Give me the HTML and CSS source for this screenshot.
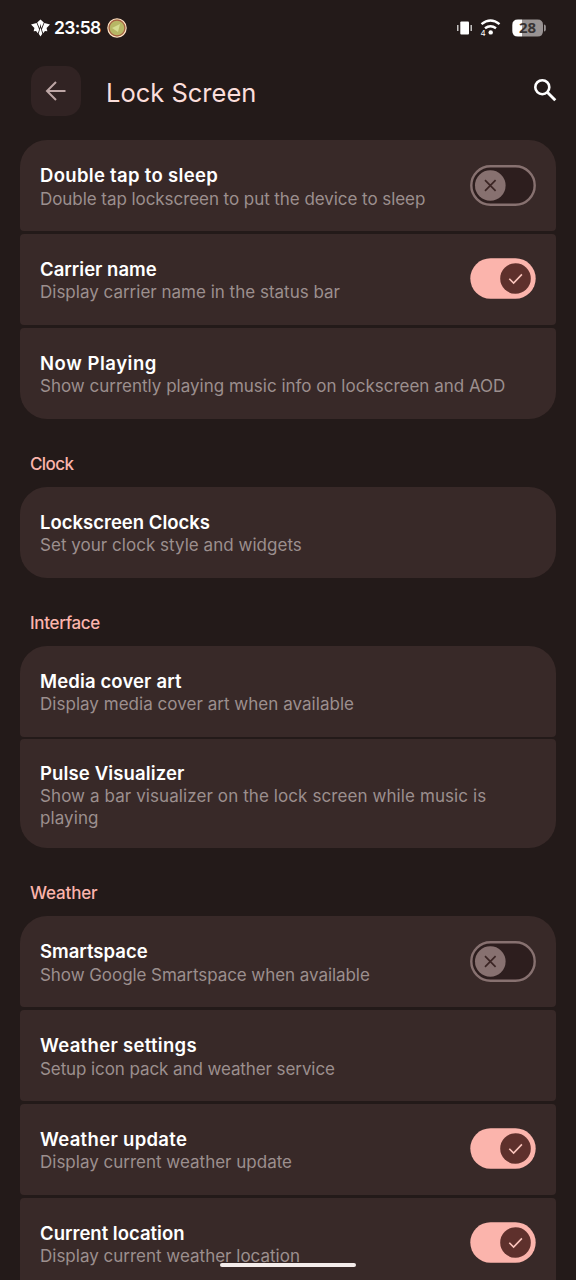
FILE: index.html
```html
<!DOCTYPE html>
<html lang="en">
<head>
<meta charset="utf-8">
<title>Lock Screen</title>
<link rel="stylesheet" href="styles.css">
</head>
<body>
<svg class="defs" width="0" height="0" aria-hidden="true">
  <symbol id="off" viewBox="0 0 66 41">
    <rect x="1.3" y="1.3" width="63.4" height="38.4" rx="19.2" fill="#2d1e1e" stroke="#877170" stroke-width="2.4"/>
    <circle cx="20.3" cy="20.5" r="15.3" fill="#877170"/>
    <path d="M15 15.2l10.6 10.6M25.600 15.200L15 25.800" fill="none" stroke="#3b2524" stroke-width="1.7"/>
  </symbol>
  <symbol id="on" viewBox="0 0 66 41">
    <rect x="0.300" y="0.300" width="65.400" height="40.400" rx="20.200" fill="#fbb4ac"/>
    <circle cx="45.500" cy="20.500" r="15.300" fill="#5e302c"/>
    <path d="M39.300 20.700l4.300 4.300 8.300-8.600" fill="none" stroke="#fbc4bc" stroke-width="1.600"/>
  </symbol>
</svg>
<div class="screen">
  <header class="status">
    <svg class="logo" viewBox="0 0 20 18"><path fill="#fff" d="M10 0l3.500 3.300-2.600 6L10 4.500 9.100 9.300l-2.600-6zM5.900 3.800L8.600 10.500 7.200 14.500 5.300 12.200 2.800 12.500 3.600 9 0 5.300zM14.100 3.800L11.400 10.500l1.400 4 1.900-2.300 2.500.3-.8-3.500L20 5.300zM10 8.500l1.900 6.500L10 18l-1.900-3z"/></svg>
    <span class="time">23:58</span>
    <svg class="badge" viewBox="0 0 20 20"><circle cx="10" cy="10" r="9.100" fill="#b7b765" stroke="#ffe1c4" stroke-width="1.300"/><circle cx="10" cy="10" r="7.900" fill="none" stroke="#a65f42" stroke-width="1.200"/><path d="M5 10l8-4-2 8z" fill="#d5dc91"/></svg>
    <svg class="vibrate" viewBox="0 0 15 14"><rect x="3.300" y="0.500" width="8.700" height="13" rx="1" fill="#fff"/><path d="M.8 4v6M14.200 4v6" stroke="#ddd" stroke-width="1.300"/></svg>
    <svg class="wifi" viewBox="0 0 21 18"><path d="M1.500 5.200Q10.500-2.300 19.500 5.200M5 9.300Q10.500 5 16 9.300" fill="none" stroke="#fff" stroke-width="2.400"/><circle cx="10.700" cy="13.400" r="2.200" fill="#fff"/><text class="wifi-gen" x="0.500" y="17.300">4</text></svg>
    <svg class="battery" viewBox="0 0 34 18"><path d="M6 .5H10V17.500H6Q.3 17.500.3 12V6Q.3 .5 6 .5z" fill="#fff"/><path d="M10 .5H25.500Q31 .5 31 6V12Q31 17.500 25.500 17.500H10z" fill="#999393"/><path d="M32 5.500q1.800 0 1.800 2v3q0 2-1.800 2z" fill="#999393"/><text class="level" x="15.500" y="14.300">28</text></svg>
  </header>
  <nav class="bar">
    <span class="back"><svg width="22" height="22" viewBox="0 0 22 22"><path d="M20.500 11H2.500M11 2L2 11l9 9" fill="none" stroke="#bda6a5" stroke-width="2"/></svg></span>
    <h1 class="heading">Lock Screen</h1>
    <svg class="search" viewBox="0 0 24 24"><circle cx="9.300" cy="9.200" r="7" fill="none" stroke="#fff" stroke-width="2.600"/><path d="M14.300 14.200l8 8" stroke="#fff" stroke-width="2.900"/></svg>
  </nav>
  <main>
    <section class="group">
      <div class="row"><div class="copy"><div class="title wide">Double tap to sleep</div><div class="sub snug">Double tap lockscreen to put the device to sleep</div></div><svg class="switch"><use href="#off"/></svg></div>
      <div class="row"><div class="copy"><div class="title">Carrier name</div><div class="sub">Display carrier name in the status bar</div></div><svg class="switch"><use href="#on"/></svg></div>
      <div class="row"><div class="copy"><div class="title wider">Now Playing</div><div class="sub">Show currently playing music info on lockscreen and AOD</div></div></div>
    </section>
    <h2 class="label label-clock">Clock</h2>
    <section class="group">
      <div class="row"><div class="copy"><div class="title">Lockscreen Clocks</div><div class="sub airy">Set your clock style and widgets</div></div></div>
    </section>
    <h2 class="label label-interface">Interface</h2>
    <section class="group">
      <div class="row"><div class="copy"><div class="title loose">Media cover art</div><div class="sub airy">Display media cover art when available</div></div></div>
      <div class="row tall"><div class="copy"><div class="title loose">Pulse Visualizer</div><div class="sub airier">Show a bar visualizer on the lock screen while music is<br>playing</div></div></div>
    </section>
    <h2 class="label label-weather">Weather</h2>
    <section class="group open">
      <div class="row"><div class="copy"><div class="title">Smartspace</div><div class="sub snug">Show Google Smartspace when available</div></div><svg class="switch"><use href="#off"/></svg></div>
      <div class="row"><div class="copy"><div class="title wide">Weather settings</div><div class="sub tight">Setup icon pack and weather service</div></div></div>
      <div class="row"><div class="copy"><div class="title wide">Weather update</div><div class="sub">Display current weather update</div></div><svg class="switch"><use href="#on"/></svg></div>
      <div class="row"><div class="copy"><div class="title">Current location</div><div class="sub">Display current weather location</div></div><svg class="switch"><use href="#on"/></svg></div>
    </section>
  </main>
  <div class="home"></div>
</div>
</body>
</html>
```
FILE: styles.css
```css
* { box-sizing: border-box; }
body { margin: 0; background: #231a19; font-family: Inter, Roboto, sans-serif; }
.defs { display: block; height: 0; }
.screen { position: relative; width: 576px; height: 1280px; overflow: hidden; }
.status { display: flex; align-items: center; height: 55px; padding: 0 30px 0 31px; }
.logo { width: 19px; height: 18px; }
.time { margin-left: 4px; width: 49px; color: #fff; font-size: 17.500px; font-weight: 600; line-height: 22px; letter-spacing: -0.650px; white-space: nowrap; }
.badge { width: 20px; height: 20px; margin-left: 4px; }
.vibrate { width: 15px; height: 14px; margin-left: auto; }
.wifi { width: 21px; height: 18px; margin-left: 8px; overflow: visible; }
.wifi-gen { fill: #fff; font-size: 8px; }
.battery { width: 34px; height: 18px; margin-left: 11px; overflow: visible; }
.level { fill: #383333; font-family: "Noto Sans", sans-serif; font-size: 15px; font-weight: 700; text-anchor: middle; }
.bar { display: flex; align-items: center; height: 72px; padding: 0 19px 0 31px; }
.back { display: grid; place-items: center; width: 50px; height: 50px; border-radius: 15px; background: #312323; }
.heading { margin: 3px 0 0 25px; color: #fbdedb; font-size: 25.500px; font-weight: 400; line-height: 32px; white-space: nowrap; }
.search { width: 24px; height: 24px; margin: 0 0 2px auto; }
main { padding: 13px 20px 0; }
.group { display: grid; gap: 2.800px; border-radius: 27px; overflow: hidden; }
.open { border-radius: 27px 27px 0 0; }
.row { display: flex; justify-content: space-between; align-items: center; height: 91px; padding: 0 20px; border-radius: 4px; background: #382928; }
.tall { height: 109px; }
.copy { display: grid; row-gap: 1.500px; justify-items: start; padding-top: 2px; }
.title { color: #fff; font-size: 18.500px; font-weight: 600; line-height: 24px; white-space: nowrap; }
.loose { letter-spacing: 0.130px; }
.wide { letter-spacing: 0.310px; }
.wider { letter-spacing: 0.550px; }
.sub { color: #9c8f8e; font-size: 17px; line-height: 21.500px; white-space: nowrap; }
.tight { letter-spacing: -0.090px; }
.snug { letter-spacing: -0.060px; }
.airy { letter-spacing: 0.030px; }
.airier { letter-spacing: 0.090px; }
.switch { flex: none; width: 66px; height: 41px; margin-bottom: 1px; }
.label { margin: 0; height: 68px; padding: 34px 0 0 10px; color: #fbb4ac; font-size: 17px; font-weight: 500; line-height: 23px; white-space: nowrap; }
.label-clock { letter-spacing: -0.600px; }
.label-interface { letter-spacing: -0.330px; }
.label-weather { letter-spacing: -0.150px; }
.home { position: absolute; left: 220px; top: 1263px; width: 136px; height: 4px; border-radius: 2px; background: #f4eceb; }
```
